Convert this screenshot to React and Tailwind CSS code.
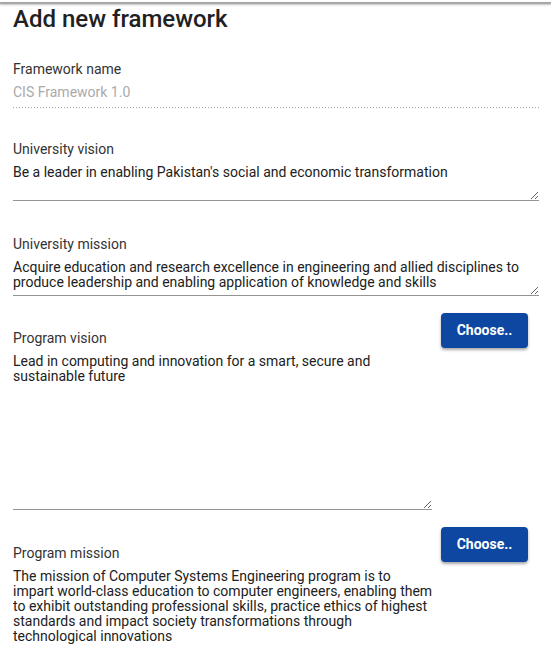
import React from 'react';

const font = { fontFamily: 'Roboto, "Noto Sans", sans-serif' };

function ChooseButton() {
  return (
    <button className="h-[35px] w-[87px] shrink-0 rounded-[4px] bg-[#0d47a1] text-[14px] font-bold text-white shadow-[0_2px_3px_rgba(0,0,0,0.35)]">
      Choose..
    </button>
  );
}

function Label({ children }) {
  return <div className="text-[14px] leading-[16px] text-[#333]">{children}</div>;
}

function Area({ value, className }) {
  return (
    <textarea
      defaultValue={value}
      className={`mt-[5px] block w-full resize-y border-0 border-b border-[#949494] bg-transparent px-0 pt-[3px] text-[14px] leading-[15px] text-[#212121] outline-none ${className}`}
    />
  );
}

export default function App() {
  return (
    <div className="min-h-screen bg-white" style={font}>
      <div className="pt-[2px]">
        <div className="h-[2px] w-full bg-[#a8a8a8] shadow-[0_1px_2px_rgba(0,0,0,0.25)]" />
      </div>

      <div className="px-[13px]">
        <h1 className="pt-[1px] text-[24px] font-medium leading-[28px] text-[#212121]">
          Add new framework
        </h1>

        {/* Framework name */}
        <div className="mt-[28px] w-[526px]">
          <Label>Framework name</Label>
          <div className="mt-[7px] text-[14px] leading-[16px] text-[#aaa]">CIS Framework 1.0</div>
          <div className="mt-[7px] h-px bg-[linear-gradient(to_right,#a5a5a5_1px,transparent_1px)] bg-[length:3px_1px] bg-repeat-x" />
        </div>

        {/* University vision */}
        <div className="mt-[33px] w-[526px]">
          <Label>University vision</Label>
          <Area
            className="h-[39px]"
            value="Be a leader in enabling Pakistan's social and economic transformation"
          />
        </div>

        {/* University mission */}
        <div className="mt-[35px] w-[526px]">
          <Label>University mission</Label>
          <Area
            className="h-[39px]"
            value="Acquire education and research excellence in engineering and allied disciplines to produce leadership and enabling application of knowledge and skills"
          />
        </div>

        {/* Program vision */}
        <div className="flex items-start gap-[9px]">
          <div className="w-[419px] pt-[34px]">
            <Label>Program vision</Label>
            <Area
              className="h-[159px]"
              value="Lead in computing and innovation for a smart, secure and sustainable future"
            />
          </div>
          <div className="pt-[17px]">
            <ChooseButton />
          </div>
        </div>

        {/* Program mission */}
        <div className="flex items-start gap-[7px]">
          <div className="w-[421px] pt-[35px]">
            <Label>Program mission</Label>
            <Area
              className="h-[158px]"
              value="The mission of Computer Systems Engineering program is to impart world-class education to computer engineers, enabling them to exhibit outstanding professional skills, practice ethics of highest standards and impact society transformations through technological innovations"
            />
          </div>
          <div className="pt-[17px]">
            <ChooseButton />
          </div>
        </div>
      </div>
    </div>
  );
}
